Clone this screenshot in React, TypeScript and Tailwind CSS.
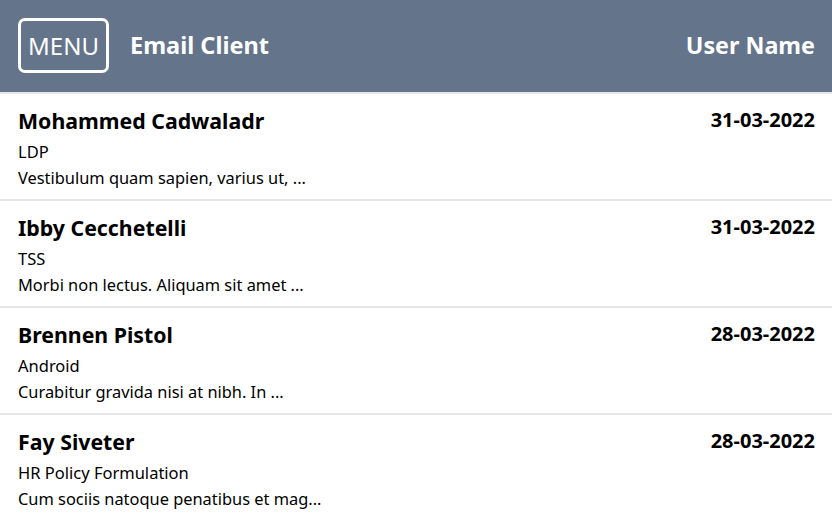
import React from "react";

const emails = [
  { name: "Mohammed Cadwaladr", subject: "LDP", preview: "Vestibulum quam sapien, varius ut, ...", date: "31-03-2022" },
  { name: "Ibby Cecchetelli", subject: "TSS", preview: "Morbi non lectus. Aliquam sit amet ...", date: "31-03-2022" },
  { name: "Brennen Pistol", subject: "Android", preview: "Curabitur gravida nisi at nibh. In ...", date: "28-03-2022" },
  { name: "Fay Siveter", subject: "HR Policy Formulation", preview: "Cum sociis natoque penatibus et mag...", date: "28-03-2022" },
];

export default function App() {
  return (
    <div className="w-[832px] h-[514px] overflow-hidden bg-white" style={{ fontFamily: '"Noto Sans", sans-serif' }}>
      <header className="h-[94px] bg-[#64748b] flex items-center justify-between pl-[18px] pr-[17px] pb-[1px] border-b-2 border-[#e5e5ea]">
        <div className="flex items-center gap-[21px]">
          <button className="w-[91px] h-[55px] border-[3px] border-white rounded-[7px] text-white text-[24px] leading-none flex items-center justify-center pt-[1px]">
            MENU
          </button>
          <span className="text-white text-[23.5px] font-bold leading-none pt-[1px]">Email Client</span>
        </div>
        <span className="text-white text-[23.3px] font-bold leading-none pt-[1px]">User Name</span>
      </header>
      {emails.map((e) => (
        <div key={e.name} className="h-[107px] border-b-2 border-[#e5e5ea] flex justify-between pl-[18px] pr-[17px] pt-[12px]">
          <div className="flex flex-col">
            <span className="text-[21.3px] font-bold text-black leading-[30px]">{e.name}</span>
            <span className="text-[16.5px] text-black leading-[26px] mt-[3px]">{e.subject}</span>
            <span className="text-[16.4px] text-black leading-[26px]">{e.preview}</span>
          </div>
          <span className="text-[20px] font-bold text-black leading-[28px]">{e.date}</span>
        </div>
      ))}
    </div>
  );
}
